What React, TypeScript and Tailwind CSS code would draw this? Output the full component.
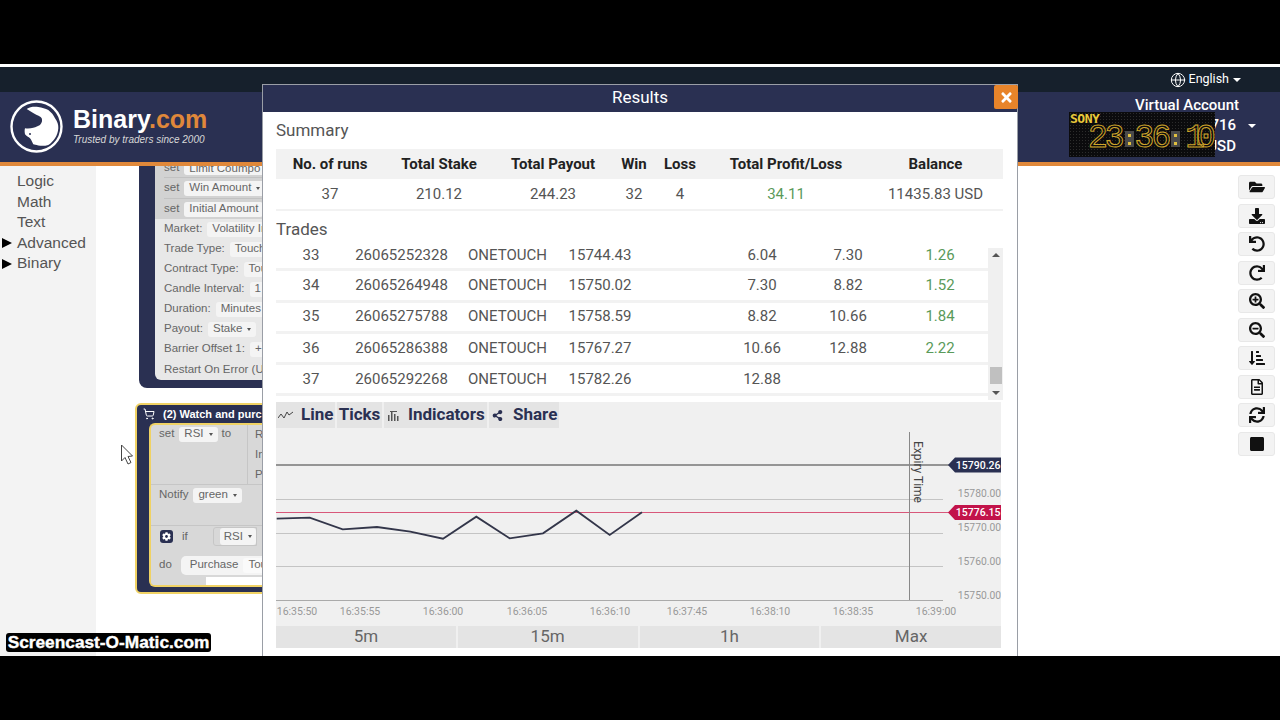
import React from "react";
import { FaFolderOpen, FaDownload, FaUndo, FaRedo, FaSearchPlus, FaSearchMinus, FaSortAmountDownAlt, FaRegFileAlt, FaSync, FaStop, FaTimes, FaCog, FaShareAlt } from "react-icons/fa";
import { Globe, ShoppingCart } from "lucide-react";

function Caret() {
  return <span className="ml-[5px] inline-block h-0 w-0 shrink-0 border-x-[2.5px] border-t-[3px] border-x-transparent border-t-[#555]" />;
}

function Chip({ children, className = "" }: { children: React.ReactNode; className?: string }) {
  return <span className={`ml-[5px] inline-flex h-[15px] items-center rounded-[3px] bg-[#f4f4f4] px-[5px] whitespace-nowrap text-[#666] ${className}`}>{children}</span>;
}

const block1: { l: string; v: React.ReactNode }[] = [
  { l: "Market:", v: "Volatility In" },
  { l: "Trade Type:", v: "Touch" },
  { l: "Contract Type:", v: "Tou" },
  { l: "Candle Interval:", v: "1" },
  { l: "Duration:", v: "Minutes" },
  { l: "Payout:", v: <>Stake<Caret /></> },
  { l: "Barrier Offset 1:", v: "+" },
];

const trades = [
  ["33", "26065252328", "ONETOUCH", "15744.43", "6.04", "7.30", "1.26"],
  ["34", "26065264948", "ONETOUCH", "15750.02", "7.30", "8.82", "1.52"],
  ["35", "26065275788", "ONETOUCH", "15758.59", "8.82", "10.66", "1.84"],
  ["36", "26065286388", "ONETOUCH", "15767.27", "10.66", "12.88", "2.22"],
  ["37", "26065292268", "ONETOUCH", "15782.26", "12.88", "", ""],
];

const toolIcons = [FaFolderOpen, FaDownload, FaUndo, FaRedo, FaSearchPlus, FaSearchMinus, FaSortAmountDownAlt, FaRegFileAlt, FaSync, FaStop];

function Block1() {
  return (
    <div className="absolute left-[43px] top-0 flex h-[222px] w-[140px] flex-col rounded-bl-[8px] bg-[#2a3052] pb-[8px] pl-[16px] text-[11.5px] text-[#666] font-['Liberation_Sans',sans-serif]">
      <div className="flex flex-1 flex-col overflow-hidden rounded-bl-[6px] bg-[#e8e8e8] pl-[9px]">
        <div className="-ml-[9px] bg-[#d2d2d2] pl-[9px]">
          <div className="flex h-[11px] items-end overflow-hidden leading-[14px]"><span className="-translate-y-[3px]">set</span><Chip className="-translate-y-[2px]">Limit Coumpo</Chip></div>
          <div className="flex h-[21px] items-center border-t border-[#c2c2c2]"><span>set</span><Chip>Win Amount<Caret /></Chip></div>
          <div className="flex h-[21px] items-center border-t border-[#c2c2c2]"><span>set</span><Chip>Initial Amount</Chip></div>
        </div>
        {block1.map((r) => (
          <div key={r.l} className="flex h-[20px] items-center whitespace-nowrap">
            <span>{r.l}</span>
            <Chip>{r.v}</Chip>
          </div>
        ))}
        <div className="flex h-[21px] items-center whitespace-nowrap">Restart On Error (U</div>
      </div>
    </div>
  );
}

function Block2() {
  return (
    <div className="absolute left-[39px] top-[237px] flex h-[191px] w-[140px] flex-col rounded-[6px] border-2 border-[#f0d264] bg-[#2a3052] pl-[12px] text-[11.5px] text-[#666] font-['Liberation_Sans',sans-serif]">
      <div className="flex h-[18px] shrink-0 items-center whitespace-nowrap text-[11px] font-bold text-white">
        <ShoppingCart size={12} className="-ml-[6px] mr-[8px] shrink-0" />
        <span>(2) Watch and purc</span>
      </div>
      <div className="flex h-[164px] flex-col overflow-hidden rounded-l-[6px] border-2 border-r-0 border-[#f0d264] bg-[#d8d8d8]">
        <div className="flex h-[60px] shrink-0 border-b border-[#c6c6c6] pl-[8px]">
          <div className="-mt-[1px] flex h-[20px] w-[88px] shrink-0 items-center">
            <span>set</span><Chip>RSI<Caret /></Chip><span className="ml-[4px]">to</span>
          </div>
          <div className="-mt-[1px] flex flex-col border-l border-[#c6c6c6] pl-[7px] leading-[20px]">
            <span>R</span><span>In</span><span>P</span>
          </div>
        </div>
        <div className="flex h-[41px] shrink-0 border-b border-[#c6c6c6] pl-[8px]">
          <div className="flex h-[20px] items-center">
            <span>Notify</span><Chip>green<Caret /></Chip>
          </div>
        </div>
        <div className="flex h-[21px] shrink-0 items-center pl-[9px]">
          <span className="flex h-[13px] w-[13px] items-center justify-center rounded-[3px] bg-[#2a3052]"><FaCog size={9} color="#fff" /></span>
          <span className="ml-[9px]">if</span>
          <span className="ml-[25px] flex h-[19px] items-center rounded-l-[3px] border border-[#c6c6c6] pl-[6px]"><span className="flex items-center rounded-[3px] bg-[#f4f4f4] px-[4px]">RSI<Caret /></span></span>
        </div>
        <div className="flex h-[30px] shrink-0 items-center pl-[8px] pt-[6px]">
          <span>do</span>
          <span className="ml-[9px] flex h-[19px] items-center whitespace-nowrap rounded-l-[5px] bg-[#f4f4f4] pl-[9px]">Purchase<Chip className="bg-[#fafafa]">Tou</Chip></span>
        </div>
        <div className="flex h-[8px] shrink-0"><div className="w-[55px] bg-[#d8d8d8]" /><div className="flex-1 bg-white" /></div>
      </div>
    </div>
  );
}

function Cursor() {
  return (
    <svg className="absolute left-[24px] top-[278px]" width="14" height="22" viewBox="0 0 14 22">
      <path d="M1.5 1 L1.5 17 L5 13.5 L8 20 L11 18.5 L8 12.5 L12.5 12 Z" fill="#fff" stroke="#444" strokeWidth="1" />
    </svg>
  );
}

function ClockColon() {
  return (
    <span className="flex h-[16px] w-[9px] flex-col items-center justify-center gap-[5px] bg-[#4a4a4a]">
      <span className="h-[3px] w-[3px] bg-[#e0c040]" />
      <span className="h-[3px] w-[3px] bg-[#e0c040]" />
    </span>
  );
}

function Clock() {
  const digits = "block text-[33px] leading-[26px] text-transparent [-webkit-text-stroke:1px_#cfa52a] font-['Liberation_Mono',monospace]";
  return (
    <div className="absolute right-[41px] top-[20px] flex h-[45px] w-[146px] flex-col overflow-hidden bg-[#0b0b0d] bg-[radial-gradient(#2c2c2c_1px,transparent_1px)] bg-[length:3px_3px]">
      <div className="pl-[1px] text-[13px] font-bold leading-[14px] tracking-[-0.5px] text-[#e8c83a] font-['DejaVu_Sans_Mono',monospace]">SONY</div>
      <div className="flex h-[26px] items-center pl-[19px]">
        <span className={`${digits} tracking-[-3px]`}>23</span>
        <span className="ml-[3px]"><ClockColon /></span>
        <span className={`ml-[1px] ${digits} tracking-[-3px]`}>36</span>
        <span className="ml-[3px]"><ClockColon /></span>
        <span className={`ml-[5px] ${digits} tracking-[-9px]`}>10</span>
      </div>
    </div>
  );
}

function Header() {
  return (
    <div className="flex h-[74px] shrink-0 items-stretch border-b-4 border-[#e0883a] bg-[#2a3052]">
      <div className="ml-[10px] flex items-center pb-[1px]">
        <svg width="53" height="53" viewBox="0 0 53 53">
          <circle cx="26.5" cy="26.5" r="25" fill="none" stroke="#fff" strokeWidth="2.4" />
          <path d="M16.7 9 C20 6.5 25 6.5 28.3 7 C32 7.5 35.5 8.5 38.3 10 C41.5 12.5 43.5 15 45 18.3 C47.5 21.5 48.5 25 48.3 28.3 C48 32 47 35.5 45 38.3 C43 41 41 43.5 38.3 45 C35 46 31.5 46 28.3 45.5 C26 45 24.5 44.8 23.3 44.3 C22 42 21.5 40 20 38.3 C18.5 37 16.5 36 15 34.3 C14.5 32 14.5 30 15 28.3 C18 28.8 21 28.5 23.3 27.7 C26 27 28 26.2 30 25 C32 23 32.5 20.5 31.7 18.3 C30.5 16.5 28.5 15.7 26.7 15 C23 13 20 11 16.7 9 Z" fill="#fff" />
          <circle cx="30" cy="19.5" r="1" fill="#2a3052" />
          <circle cx="20" cy="34" r="1" fill="#2a3052" />
        </svg>
      </div>
      <div className="ml-[10px] flex flex-col pt-[13px] font-['Liberation_Sans',sans-serif]">
        <div className="text-[25px] font-bold leading-[29px] text-white">Binary<span className="text-[#e0883a]">.com</span></div>
        <div className="text-[10px] italic leading-[12px] text-[#d8d8d8]">Trusted by traders since 2000</div>
      </div>
      <div className="relative ml-auto mr-[24px] flex w-[120px] flex-col items-end font-['Roboto',sans-serif] text-white">
        <div className="mr-[17px] mt-[3px] whitespace-nowrap text-[15px] font-medium leading-[20px]">Virtual Account</div>
        <div className="flex h-[21px] items-center text-[15px] font-medium">
          <span className="mr-[12px]">716</span>
          <span className="h-0 w-0 border-x-[4px] border-t-[4px] border-x-transparent border-t-white" />
        </div>
        <div className="mr-[20px] flex h-[20px] items-center text-[15px] font-medium">USD</div>
        <Clock />
      </div>
    </div>
  );
}

function Chart() {
  const axis = "#999";
  const line = "276.7,518.7 309.7,517.7 342.7,529.3 377,527 410.3,531.7 443,538.7 476.3,516.7 509.7,538.3 543,533.3 576.3,510.7 609.7,535 642,512.3";
  const xs: [string, number][] = [["16:35:50", 297], ["16:35:55", 360], ["16:36:00", 443], ["16:36:05", 527], ["16:36:10", 610], ["16:37:45", 687], ["16:38:10", 770], ["16:38:35", 853], ["16:39:00", 936]];
  const ys: [string, number][] = [["15780.00", 497], ["15770.00", 531], ["15760.00", 565], ["15750.00", 599]];
  return (
    <svg width="725" height="198" viewBox="276 428 725 198" className="block shrink-0" fontFamily="Roboto, sans-serif">
      {[499.5, 533.5, 566.5, 600.5].map((y) => (
        <line key={y} x1="276" x2="943" y1={y} y2={y} stroke={y === 600.5 ? "#aaa" : "#c4c4c4"} strokeWidth="1" />
      ))}
      <line x1="276" x2="950" y1="465" y2="465" stroke="#777" strokeWidth="1.5" />
      <line x1="276" x2="950" y1="512.5" y2="512.5" stroke="#d8577a" strokeWidth="1" />
      <line x1="909.5" x2="909.5" y1="432" y2="600" stroke="#888" strokeWidth="1" />
      <polyline points={line} fill="none" stroke="#33364a" strokeWidth="1.8" />
      <text x="0" y="0" transform="translate(914 441) rotate(90)" fontSize="12" fill="#444">Expiry Time</text>
      {xs.map(([t, x]) => (
        <text key={t} x={x} y="615" fontSize="10.5" fill={axis} textAnchor="middle">{t}</text>
      ))}
      {ys.map(([t, y]) => (
        <text key={t} x="1001" y={y} fontSize="10.3" fill={axis} textAnchor="end">{t}</text>
      ))}
      <path d="M948 465 L955 457.5 L1001 457.5 L1001 472.5 L955 472.5 Z" fill="#2a3052" />
      <text x="1000.5" y="468.8" fontSize="10.5" fontWeight="500" fill="#fff" textAnchor="end">15790.26</text>
      <path d="M948 512.5 L955 505 L1001 505 L1001 520 L955 520 Z" fill="#c2134a" />
      <text x="1000.5" y="516.3" fontSize="10.5" fontWeight="500" fill="#fff" textAnchor="end">15776.15</text>
    </svg>
  );
}

function Modal() {
  const sumCols = "grid grid-cols-[108px_110px_118px_44px_48px_164px_135px] items-center text-center";
  const tradeCols = "grid grid-cols-[70px_111px_101px_84px_78px_84px_88px_96px] text-center";
  return (
    <div className="absolute left-[262px] top-[84px] flex h-[572px] w-[756px] flex-col border-x border-t border-[#9a9ea6] bg-white font-['Roboto',sans-serif] text-[15px] text-[#555]">
      <div className="relative flex h-[27px] shrink-0 items-center justify-center bg-[#2a3052] pb-[1px] text-[17px] text-white">
        Results
        <div className="absolute right-[-1px] top-0 flex h-[24px] w-[24px] items-center justify-center rounded-[2px] bg-[#e8842a]"><FaTimes size={15} color="#fff" /></div>
      </div>
      <div className="flex flex-1 flex-col pl-[13px]">
        <div className="flex h-[37px] shrink-0 items-center text-[17px] text-[#555]">Summary</div>
        <div className={`${sumCols} h-[30px] w-[727px] shrink-0 bg-[#f2f2f2] font-bold text-[#222]`}>
          <span>No. of runs</span><span>Total Stake</span><span>Total Payout</span><span>Win</span><span>Loss</span><span>Total Profit/Loss</span><span>Balance</span>
        </div>
        <div className={`${sumCols} h-[32px] w-[727px] shrink-0 border-b-2 border-[#f2f2f2]`}>
          <span>37</span><span>210.12</span><span>244.23</span><span>32</span><span>4</span><span className="text-[#5a9a5a]">34.11</span><span>11435.83 USD</span>
        </div>
        <div className="flex h-[37px] shrink-0 items-center text-[17px] text-[#555]">Trades</div>
        <div className="flex h-[154px] w-[727px] shrink-0">
          <div className="h-full w-[712px]">
            {trades.map((t, i) => (
              <div key={t[0]} className={`${tradeCols} border-b-[3px] border-[#f2f2f2] ${i === 0 ? "h-[23.25px] items-start leading-[14px]" : "h-[31.25px] items-center"}`}>
                <span>{t[0]}</span><span>{t[1]}</span><span>{t[2]}</span><span>{t[3]}</span><span />
                <span>{t[4]}</span><span>{t[5]}</span><span className="text-[#5a9a5a]">{t[6]}</span>
              </div>
            ))}
          </div>
          <div className="flex h-[152px] w-[15px] flex-col items-center bg-[#f0f0f0] pt-[5px]">
            <span className="h-0 w-0 border-x-[4px] border-b-[4px] border-x-transparent border-b-[#555]" />
            <span className="flex-1" />
            <span className="h-[17px] w-[12px] bg-[#c0c0c0]" />
            <span className="mb-[5px] mt-[7px] h-0 w-0 border-x-[4px] border-t-[4px] border-x-transparent border-t-[#555]" />
          </div>
        </div>
        <div className="flex h-[246px] w-[725px] shrink-0 flex-col bg-[#f0f0f0]">
          <div className="flex h-[26px] shrink-0 items-center gap-[2px] text-[17px] font-bold text-[#2a3052]">
            <div className="flex h-full w-[59px] items-center gap-[8px] bg-[#e4e4e4] pl-[2px]">
              <svg width="15" height="10" viewBox="0 0 15 10" fill="none" stroke="#444" strokeWidth="1"><path d="M0 8 L3 4 L6 8 L9 2 L11 5 L15 2" /></svg>
              <span>Line</span>
            </div>
            <div className="flex h-full w-[45px] items-center justify-center bg-[#e4e4e4]">Ticks</div>
            <div className="flex h-full w-[103px] items-center gap-[9px] bg-[#e4e4e4] pl-[4px]">
              <svg width="11" height="11" viewBox="0 0 11 11" fill="#555"><path d="M0 5h1.5v6H0zM3 2h1.5v9H3zM6 4h1.5v7H6zM9 6h1.5v5H9zM2 1h7v1H2z" /></svg>
              <span>Indicators</span>
            </div>
            <div className="flex h-full w-[70px] items-center gap-[10px] bg-[#e4e4e4] pl-[3px]">
              <FaShareAlt size={11} color="#2a3052" />
              <span>Share</span>
            </div>
          </div>
          <Chart />
          <div className="flex h-[22px] shrink-0 gap-[2px] text-[17px] text-[#666]">
            {["5m", "15m", "1h", "Max"].map((b) => (
              <div key={b} className="flex flex-1 items-center justify-center bg-[#e4e4e4]">{b}</div>
            ))}
          </div>
        </div>
      </div>
    </div>
  );
}

export default function App() {
  return (
    <div className="relative flex h-[720px] w-[1280px] flex-col overflow-hidden bg-white">
      <div className="h-[64px] shrink-0 bg-black" />
      <div className="h-[3px] shrink-0 bg-white" />
      <div className="flex h-[25px] shrink-0 items-center justify-end bg-[#16202c] pr-[39px] font-['Roboto',sans-serif] text-[12.5px] text-white">
        <Globe size={16} strokeWidth={1.5} className="mr-[3px]" />
        <span>English</span>
        <span className="ml-[4px] h-0 w-0 border-x-[4px] border-t-[4px] border-x-transparent border-t-white" />
      </div>
      <Header />
      <div className="flex h-[490px] shrink-0">
        <div className="w-[96px] shrink-0 bg-[#f3f3f3] pt-[5px] font-['Liberation_Sans',sans-serif] text-[15.5px] leading-[20.6px] text-[#555]">
          {["Logic", "Math", "Text", "Advanced", "Binary"].map((s, i) => (
            <div key={s} className="flex items-center pl-[2px]">
              {i > 2 ? <span className="h-0 w-0 border-y-[5.5px] border-l-[10px] border-y-transparent border-l-black" /> : <span className="w-[10px]" />}
              <span className="ml-[5px]">{s}</span>
            </div>
          ))}
        </div>
        <div className="relative flex-1 overflow-hidden">
          <Block1 />
          <Block2 />
          <Cursor />
        </div>
        <div className="flex w-[42px] shrink-0 flex-col gap-[4.5px] pr-[5px] pt-[9px]">
          {toolIcons.map((I, i) => (
            <div key={i} className="flex h-[24px] w-[37px] items-center justify-center rounded-[3px] border border-[#e8e8e8] bg-[#f3f3f3]">
              <I size={16} color="#111" />
            </div>
          ))}
        </div>
      </div>
      <div className="h-[64px] shrink-0 bg-black" />
      <Modal />
      <div className="absolute left-[6px] top-[633px] flex h-[19px] w-[205px] items-center justify-center rounded-[3px] bg-black text-[17.3px] font-bold text-white [-webkit-text-stroke:0.4px_#fff] font-['Liberation_Sans',sans-serif]">Screencast-O-Matic.com</div>
    </div>
  );
}
